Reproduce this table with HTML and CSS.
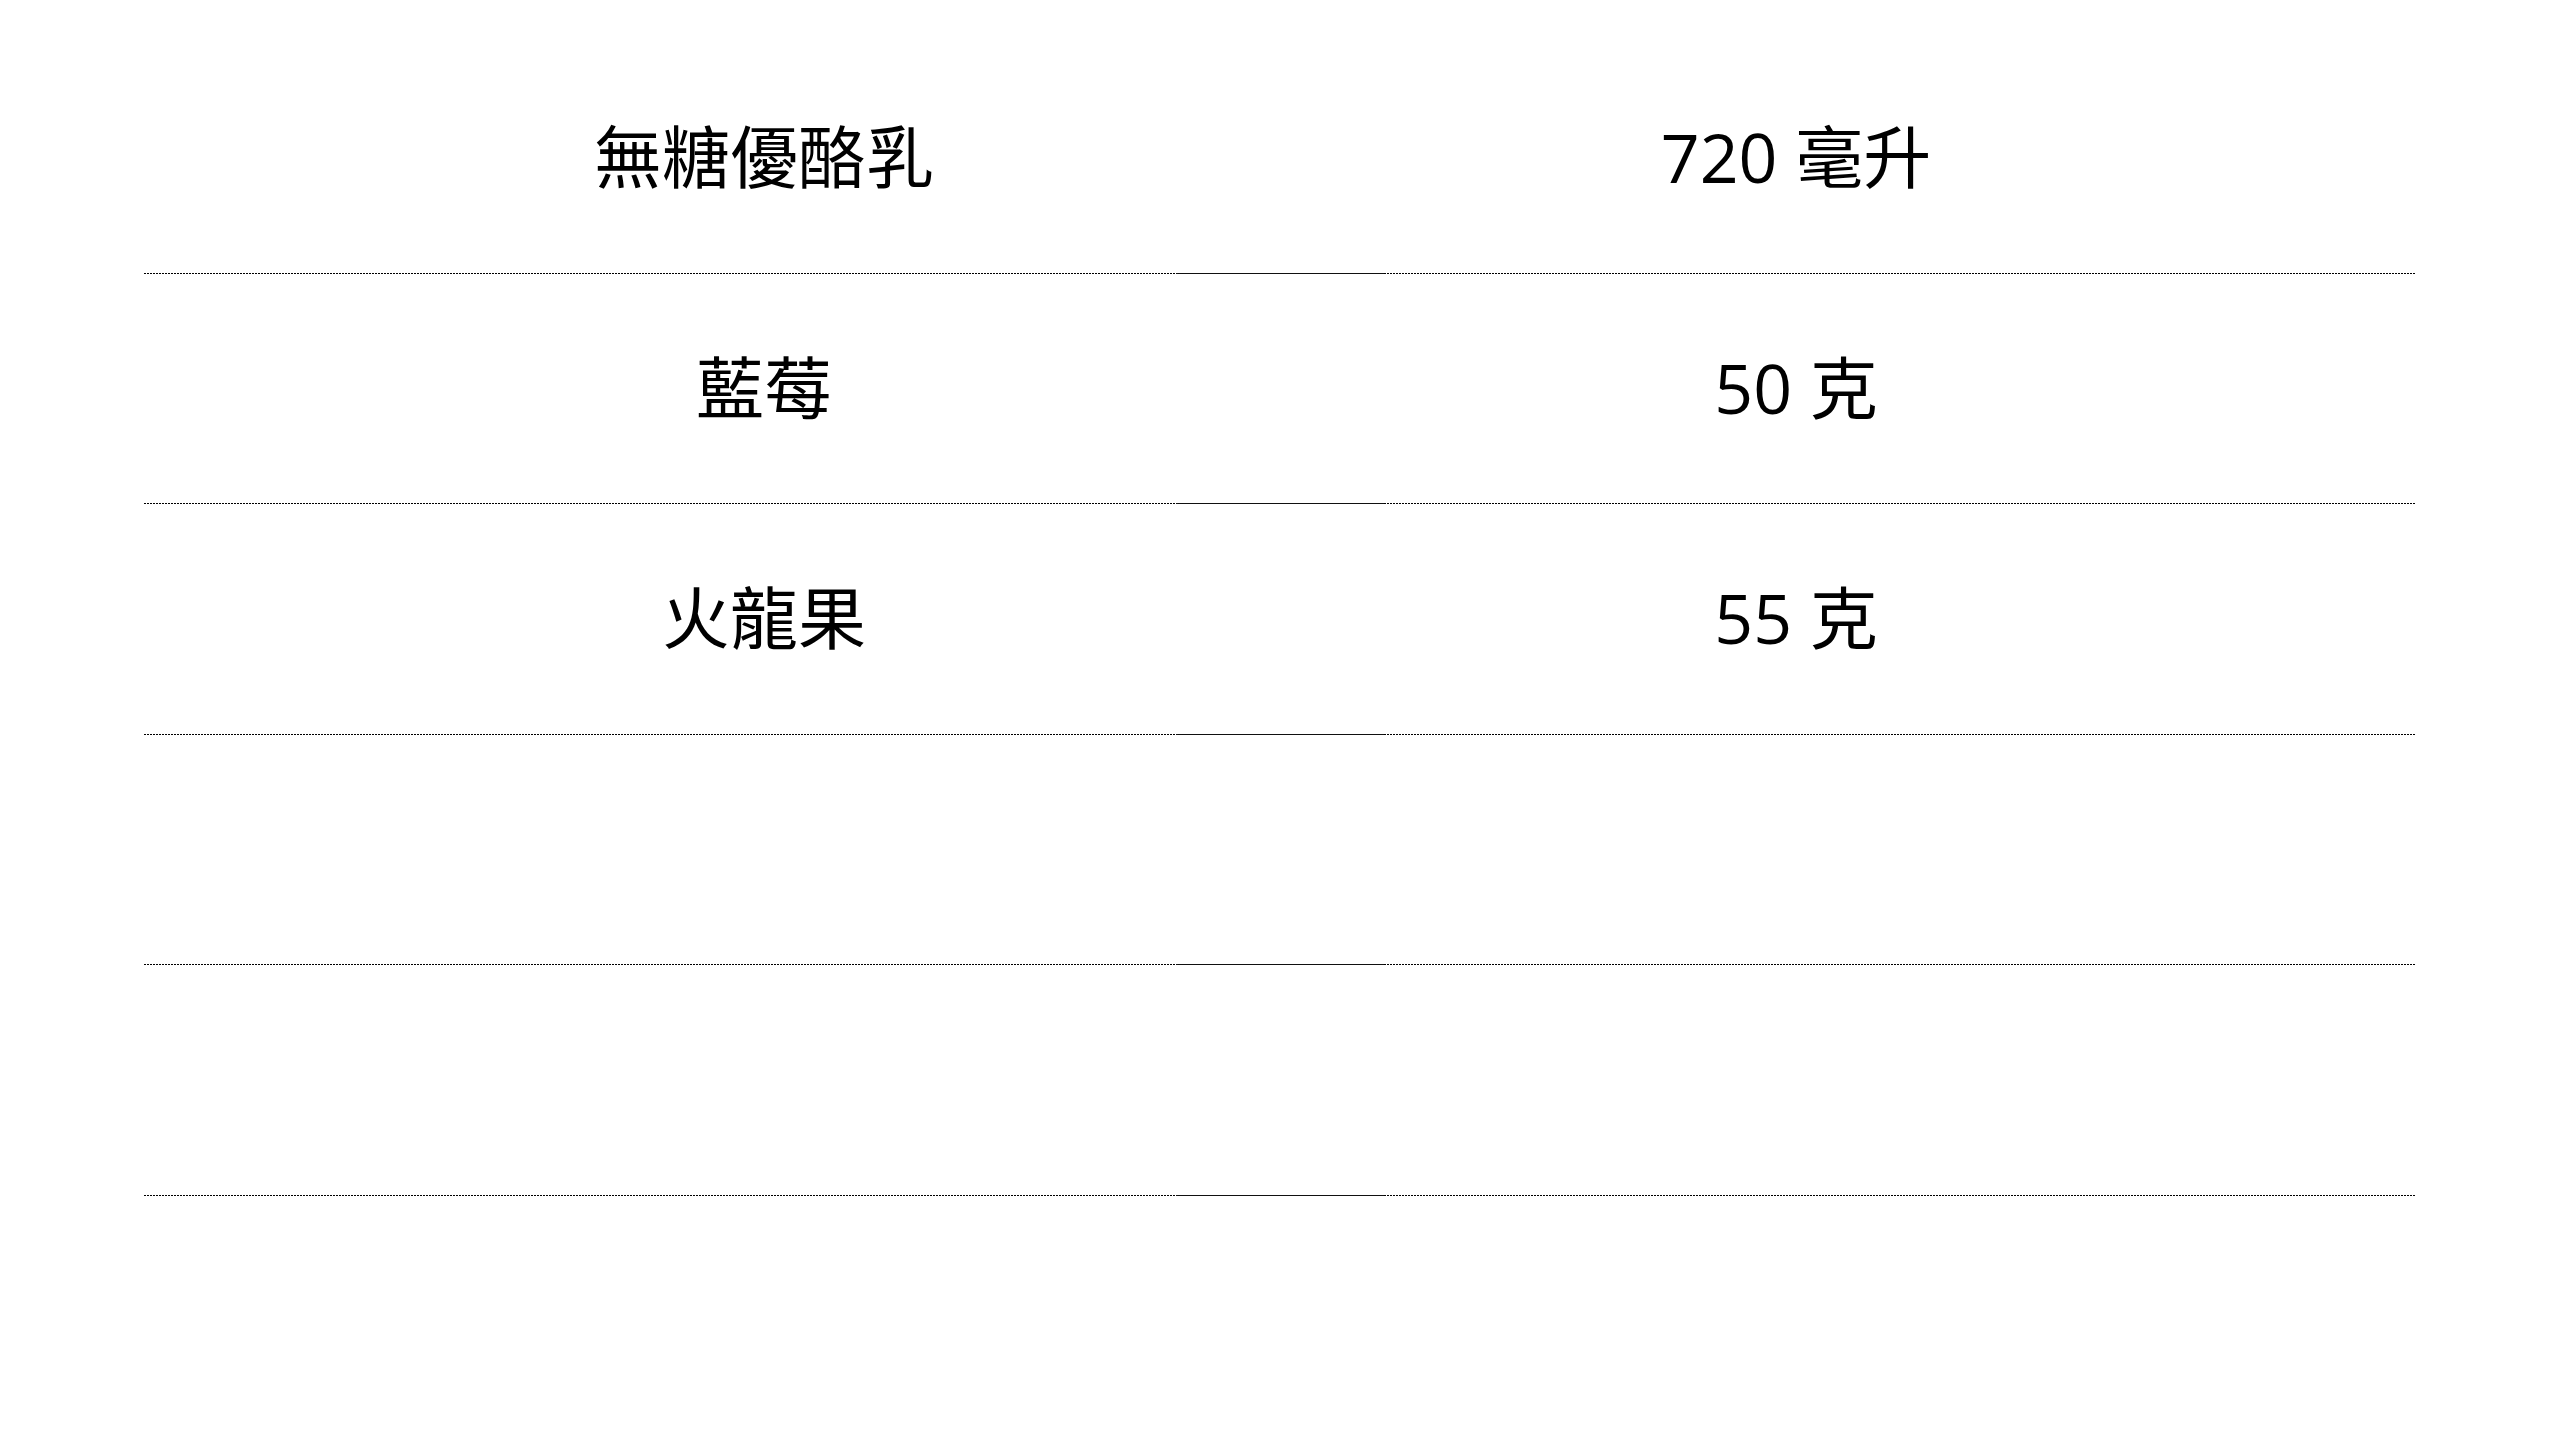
FILE: index.html
```html
<!DOCTYPE html>
<html lang="zh-Hant">
<head>
<meta charset="utf-8">
<title>食材清單</title>
<link rel="stylesheet" href="styles.css">
</head>
<body>
<div class="sheet">
  <div class="row">
    <div class="cell name">無糖優酪乳</div>
    <div class="cell mid"></div>
    <div class="cell qty">720 毫升</div>
  </div>
  <div class="row">
    <div class="cell name">藍莓</div>
    <div class="cell mid"></div>
    <div class="cell qty">50 克</div>
  </div>
  <div class="row">
    <div class="cell name">火龍果</div>
    <div class="cell mid"></div>
    <div class="cell qty">55 克</div>
  </div>
  <div class="row">
    <div class="cell name"></div>
    <div class="cell mid"></div>
    <div class="cell qty"></div>
  </div>
  <div class="row">
    <div class="cell name"></div>
    <div class="cell mid"></div>
    <div class="cell qty"></div>
  </div>
</div>
</body>
</html>
```

FILE: styles.css
```css
html, body {
  margin: 0;
  padding: 0;
  background: #ffffff;
}

body {
  width: 2560px;
  height: 1440px;
  font-family: "Open Sans", "Noto Sans CJK TC", sans-serif;
  color: #000000;
}

.sheet {
  padding: 43px 144px 0 144px;
  display: flex;
  flex-direction: column;
}

.row {
  display: grid;
  grid-template-columns: 1fr 208px 1fr;
  height: 230.5px;
}

.cell {
  box-sizing: border-box;
  display: flex;
  align-items: center;
  justify-content: center;
  font-size: 68px;
  line-height: 1;
  padding-bottom: 2px;
  background-image: repeating-linear-gradient(to right, #000000 0, #000000 2px, transparent 2px, transparent 3px);
  background-size: 100% 1px;
  background-repeat: no-repeat;
  background-position: left bottom;
}

.name {
  padding-left: 208px;
}

.qty {
  padding-right: 208px;
}

.mid {
  background-image: linear-gradient(#111111, #111111);
}
```
